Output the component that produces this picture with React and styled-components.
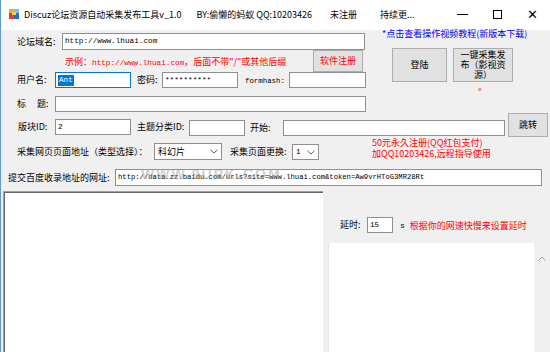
import React from "react";
import styled, { createGlobalStyle } from "styled-components";

const CJK = `"Noto Sans CJK SC", "Noto Sans", sans-serif`;
const MONO = `"Liberation Mono", "DejaVu Sans Mono", monospace`;

const GlobalStyle = createGlobalStyle`
  html, body { margin: 0; padding: 0; background: #fff; }
  body { width: 550px; height: 352px; overflow: hidden; }
`;

const Window = styled.div`
  width: 550px;
  height: 352px;
  box-sizing: border-box;
  border-left: 1px solid #5b9bd5;
  display: flex;
  flex-direction: column;
  font-family: ${CJK};
  font-size: 9px;
  color: #000;
  overflow: hidden;
`;

// title bar
const TitleBar = styled.div`
  height: 30px;
  flex: none;
  background: #fff;
  display: flex;
  align-items: center;
  padding-bottom: 2px;
  box-sizing: border-box;
  font-size: 9px;
  white-space: nowrap;
`;

const AppIcon = styled.svg`
  margin-left: 8px;
  flex: none;
`;

const TitleText = styled.span`
  margin-left: ${p => p.$ml}px;
  flex: none;
`;

const Controls = styled.div`
  margin-left: auto;
  display: flex;
  flex: none;
`;

const Ctrl = styled.div`
  width: 35px;
  height: 28px;
  display: flex;
  align-items: center;
  justify-content: center;
`;

const MinGlyph = styled.span`
  width: 11px;
  height: 1px;
  background: #000;
`;

const MaxGlyph = styled.span`
  width: 9px;
  height: 9px;
  box-sizing: border-box;
  border: 1px solid #000;
`;

const CloseGlyph = styled.span`
  font-family: "DejaVu Sans", sans-serif;
  font-size: 13px;
  line-height: 13px;
  font-weight: 300;
`;

// body
const Body = styled.div`
  flex: 1;
  background: #f0f0f0;
  display: flex;
  flex-direction: column;
  min-height: 0;
`;

const Top = styled.div`
  height: 82px;
  flex: none;
  display: flex;
`;

const LeftCol = styled.div`
  width: 367px;
  flex: none;
  padding-top: 3px;
  display: flex;
  flex-direction: column;
`;

const RightCol = styled.div`
  flex: 1;
  display: flex;
  flex-direction: column;
`;

const Row = styled.div`
  height: ${p => p.$h}px;
  margin-top: ${p => p.$mt || 0}px;
  flex: none;
  display: flex;
  align-items: ${p => p.$align || "center"};
  white-space: nowrap;
`;

const Label = styled.div`
  width: ${p => p.$w}px;
  margin-left: ${p => p.$ml || 0}px;
  margin-top: ${p => p.$mt || 0}px;
  line-height: ${p => p.$lh || 16}px;
  flex: none;
  white-space: nowrap;
`;

const Box = styled.div`
  width: ${p => p.$w}px;
  height: ${p => p.$h || 16}px;
  margin-left: ${p => p.$ml || 0}px;
  margin-top: ${p => p.$mt || 0}px;
  box-sizing: border-box;
  flex: none;
  background: #fff;
  border: 1px solid ${p => (p.$focus ? "#0078d7" : "#8f8f8f")};
  display: flex;
  align-items: center;
  padding-left: 2px;
  overflow: hidden;
  white-space: nowrap;
`;

const Mono = styled.span`
  font-family: ${MONO};
  font-size: ${p => p.$fs || 7.7}px;
  line-height: 11px;
`;

const Selected = styled.span`
  font-family: ${MONO};
  font-size: 7.7px;
  line-height: 11px;
  background: #0078d7;
  color: #fff;
  padding: 0 1px;
`;

const Btn = styled.div`
  width: ${p => p.$w}px;
  height: ${p => p.$h}px;
  margin-left: ${p => p.$ml || 0}px;
  flex: none;
  box-sizing: border-box;
  background: #e1e1e1;
  border: 1px solid #adadad;
  color: ${p => (p.$red ? "#ff0000" : "#000")};
  display: flex;
  align-items: center;
  justify-content: center;
  text-align: center;
  font-size: 9px;
  line-height: 10px;
  padding: 0 5px;
  white-space: normal;
  overflow: hidden;
`;

const Hint = styled.div`
  width: 248px;
  margin-left: 64px;
  flex: none;
  color: #ff0000;
  white-space: nowrap;
  overflow: hidden;
`;

const RedMono = styled.span`
  font-family: ${MONO};
  font-size: 7.7px;
`;

const Link = styled.div`
  margin-left: 14px;
  margin-top: -1px;
  height: 10px;
  line-height: 10px;
  color: #0000ff;
  white-space: nowrap;
`;

const BtnRow = styled.div`
  display: flex;
  gap: 6px;
  margin-top: 9px;
  margin-left: 24px;
`;

const Dot = styled.div`
  margin-left: 110px;
  margin-top: 2px;
  height: 8px;
  line-height: 6px;
  color: #ff0000;
`;

const Select = styled.div`
  width: ${p => p.$w}px;
  height: ${p => p.$h || 17}px;
  margin-top: ${p => p.$mt || 0}px;
  flex: none;
  box-sizing: border-box;
  background: #fff;
  border: 1px solid #8f8f8f;
  display: flex;
  align-items: center;
  justify-content: space-between;
  padding: 0 3px;
`;

const RedNote = styled.div`
  margin-left: 53px;
  margin-top: -3px;
  line-height: 11px;
  color: #ff0000;
  white-space: nowrap;
`;

const Stamp = styled.div`
  position: relative;
  flex: none;
  margin-top: 1px;
`;

const Watermark = styled.div`
  position: absolute;
  left: 26px;
  top: -3px;
  font-family: "Liberation Sans", Arial, sans-serif;
  font-weight: bold;
  font-size: 14px;
  letter-spacing: 2px;
  color: rgba(160, 160, 160, 0.5);
  pointer-events: none;
`;

const Bottom = styled.div`
  flex: 1;
  margin-top: 5px;
  display: flex;
  min-height: 0;
`;

const Log = styled.div`
  width: 320px;
  margin-left: 2px;
  flex: none;
  box-sizing: border-box;
  background: #fff;
  border-top: 1px solid #a0a0a0;
  border-left: 1px solid #a0a0a0;
  box-shadow: inset 1px 1px 0 #696969;
`;

const Side = styled.div`
  flex: 1;
  display: flex;
  flex-direction: column;
`;

const DelayRow = styled.div`
  margin-top: 26px;
  height: 16px;
  display: flex;
  align-items: center;
  white-space: nowrap;
`;

const Unit = styled.span`
  margin-left: 7px;
  font-family: ${MONO};
  font-size: 8px;
`;

const RedText = styled.span`
  margin-left: 5px;
  color: #ff0000;
`;

const Memo = styled.div`
  flex: 1;
  margin-top: 10px;
  margin-left: 5px;
  display: flex;
  background: #fff;
  border-left: 1px solid #e3e3e3;
`;

const MemoBody = styled.div`
  flex: 1;
`;

const Scroll = styled.div`
  width: 16px;
  background: #f0f0f0;
  display: flex;
  justify-content: center;
  padding-top: 13px;
  box-sizing: border-box;
`;

const Chevron = ({ up }) => (
  <svg width="8" height="5" viewBox="0 0 8 5">
    <path
      d={up ? "M0.5 4.5 L4 1 L7.5 4.5" : "M0.5 0.8 L4 4 L7.5 0.8"}
      fill="none"
      stroke={up ? "#a0a0a0" : "#606060"}
      strokeWidth="1"
    />
  </svg>
);

export default function App() {
  return (
    <>
      <GlobalStyle />
      <Window>
        <TitleBar>
          <AppIcon width="10" height="10" viewBox="0 0 10 10">
            <rect x="0" y="0" width="5" height="4" fill="#f5a623" />
            <rect x="5" y="0" width="5" height="4" fill="#8fb8e8" />
            <rect x="0" y="4" width="5" height="6" fill="#e53935" />
            <rect x="5" y="4" width="5" height="6" fill="#1e6fd9" />
            <rect x="3" y="3" width="4" height="3" fill="#f7d046" />
          </AppIcon>
          <TitleText $ml={5}>Discuz论坛资源自动采集发布工具v_1.0</TitleText>
          <TitleText $ml={15}>BY:偷懒的蚂蚁 QQ:10203426</TitleText>
          <TitleText $ml={18}>未注册</TitleText>
          <TitleText $ml={23}>持续更...</TitleText>
          <Controls>
            <Ctrl><MinGlyph /></Ctrl>
            <Ctrl><MaxGlyph /></Ctrl>
            <Ctrl><CloseGlyph>✕</CloseGlyph></Ctrl>
          </Controls>
        </TitleBar>

        <Body>
          <Top>
            <LeftCol>
              <Row $h={17}>
                <Label $ml={16} $w={45}>论坛域名:</Label>
                <Box $w={303} $h={17}><Mono>http://www.lhuai.com</Mono></Box>
              </Row>
              <Row $h={22}>
                <Hint>
                  示例：<RedMono>http://www.lhuai.com</RedMono>，后面不带"/"或其他后缀
                </Hint>
                <Btn $w={50} $h={22} $red>软件注册</Btn>
              </Row>
              <Row $h={16}>
                <Label $ml={16} $w={38}>用户名:</Label>
                <Box $w={76} $focus><Selected>Ant</Selected></Box>
                <Label $ml={6} $w={25}>密码:</Label>
                <Box $w={76}><Mono>**********</Mono></Box>
                <Label $ml={7} $w={44}><Mono $fs={7.4}>formhash:</Mono></Label>
                <Box $w={77} />
              </Row>
              <Row $h={16} $mt={8}>
                <Label $ml={16} $w={38}>标　 题:</Label>
                <Box $w={311} />
              </Row>
            </LeftCol>
            <RightCol>
              <Link>*点击查看操作视频教程(新版本下载)</Link>
              <BtnRow>
                <Btn $w={55} $h={34}>登陆</Btn>
                <Btn $w={60} $h={34}>一键采集发布（影视资源）</Btn>
              </BtnRow>
              <Dot>。</Dot>
            </RightCol>
          </Top>

          <Row $h={24} $mt={1} $align="flex-start">
            <Label $ml={17} $w={37} $mt={6}>版块ID:</Label>
            <Box $w={76} $mt={6}><Mono>2</Mono></Box>
            <Label $ml={6} $w={52} $mt={6}>主题分类ID:</Label>
            <Box $w={56} $mt={7} />
            <Label $ml={5} $w={33} $mt={7}>开始:</Label>
            <Box $w={222} $mt={7} />
            <Btn $w={40} $h={24} $ml={3}>跳转</Btn>
          </Row>

          <Row $h={22} $mt={3} $align="flex-start">
            <Label $ml={16} $w={137} $mt={3} $lh={17}>采集网页页面地址（类型选择）：</Label>
            <Select $w={68} $mt={3}>
              <span>科幻片</span>
              <Chevron />
            </Select>
            <Label $ml={8} $w={62} $mt={4} $lh={16}>采集页面更换:</Label>
            <Select $w={27} $h={16} $mt={4}>
              <Mono>1</Mono>
              <Chevron />
            </Select>
            <RedNote>
              50元永久注册(QQ红包支付)
              <br />
              加QQ10203426,远程指导使用
            </RedNote>
          </Row>

          <Row $h={18} $mt={6} $align="flex-start">
            <Label $ml={7} $w={107} $mt={1} $lh={17}>提交百度收录地址的网址:</Label>
            <Stamp>
              <Box $w={427} $h={17}>
                <Mono $fs={7.2}>http://data.zz.baidu.com/urls?site=www.lhuai.com&amp;token=Aw9vrHToG3MR28Rt</Mono>
              </Box>
              <Watermark>WWW.9UPK.COM</Watermark>
            </Stamp>
          </Row>

          <Bottom>
            <Log />
            <Side>
              <DelayRow>
                <Label $ml={17} $w={27}>延时:</Label>
                <Box $w={26}><Mono>15</Mono></Box>
                <Unit>s</Unit>
                <RedText>根据你的网速快慢来设置延时</RedText>
              </DelayRow>
              <Memo>
                <MemoBody />
                <Scroll>
                  <Chevron up />
                </Scroll>
              </Memo>
            </Side>
          </Bottom>
        </Body>
      </Window>
    </>
  );
}
